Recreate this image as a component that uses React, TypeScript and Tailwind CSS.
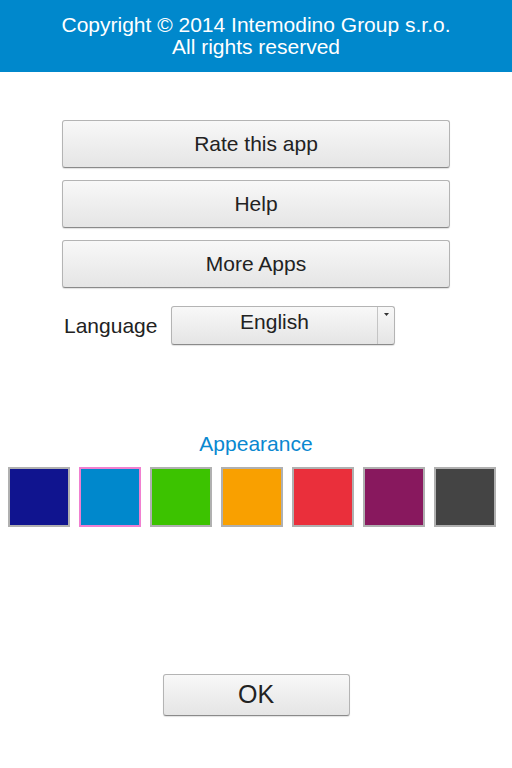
const swatches = [
  { color: 'bg-[#10148f]', selected: false },
  { color: 'bg-[#0088cc]', selected: true },
  { color: 'bg-[#3cc300]', selected: false },
  { color: 'bg-[#f9a000]', selected: false },
  { color: 'bg-[#ea2f3b]', selected: false },
  { color: 'bg-[#88185e]', selected: false },
  { color: 'bg-[#444444]', selected: false },
]

const btn =
  'rounded-[3px] border border-[#b4b4b4] border-b-[#8a8a8a] bg-gradient-to-b from-[#f8f8f8] to-[#e5e5e5] text-[#222] shadow-[0_1px_1px_rgba(0,0,0,0.12)]'

function MenuButton({ label }: { label: string }) {
  return (
    <button className={`${btn} w-[388px] h-[48px] text-[21px]`}>
      {label}
    </button>
  )
}

export default function App() {
  return (
    <div className="w-[512px] h-[768px] bg-white flex flex-col font-['Liberation_Sans',Arial,sans-serif]">
      <header className="h-[72px] bg-[#0088cc] text-white text-[21px] leading-[22px] flex flex-col items-center justify-center">
        <div>Copyright © 2014 Intemodino Group s.r.o.</div>
        <div>All rights reserved</div>
      </header>

      <div className="flex flex-col items-center gap-3 pt-[48px]">
        <MenuButton label="Rate this app" />
        <MenuButton label="Help" />
        <MenuButton label="More Apps" />
      </div>

      <div className="flex items-center mt-[18px] pl-[64px]">
        <span className="text-[21px] text-[#222] w-[107px]">Language</span>
        <div className={`${btn} w-[224px] h-[39px] flex items-stretch`}>
          <div className="flex-1 text-center text-[21px] leading-[30px]">English</div>
          <div className="w-[17px] border-l border-[#c4c4c4] flex justify-center pt-[6px]">
            <svg width="5" height="3" viewBox="0 0 5 3">
              <path d="M0 0h5L2.5 3z" fill="#333" />
            </svg>
          </div>
        </div>
      </div>

      <div className="mt-[83px] text-center text-[21px] text-[#0a88d0]">Appearance</div>

      <div className="flex gap-[9px] pl-[8px] mt-[7px]">
        {swatches.map((s, i) => (
          <div
            key={i}
            className={`w-[62px] h-[60px] border-2 ${s.selected ? 'border-[#f07fd0]' : 'border-[#b0b0b0]'} ${s.color}`}
          />
        ))}
      </div>

      <div className="flex justify-center mt-[147px]">
        <button className={`${btn} w-[187px] h-[42px] text-[25px]`}>OK</button>
      </div>
    </div>
  )
}
